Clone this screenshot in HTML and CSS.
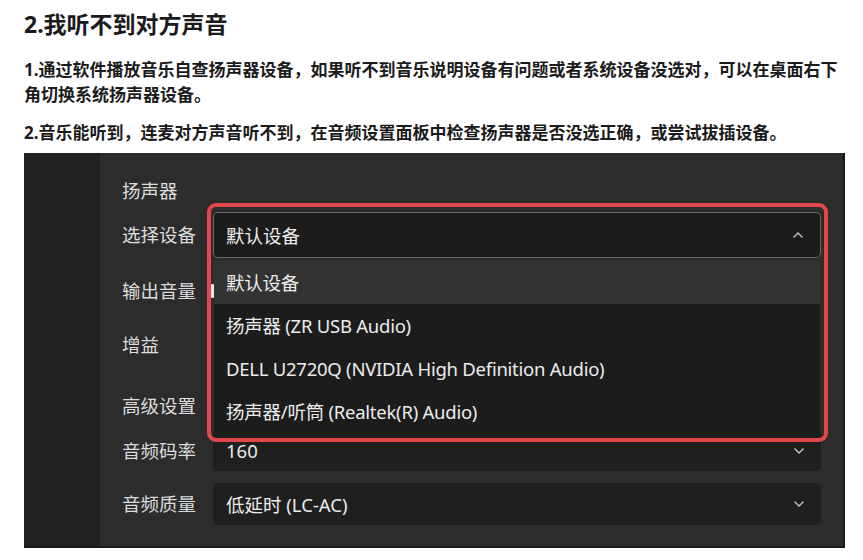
FILE: index.html
```html
<!DOCTYPE html>
<html lang="zh-CN">
<head>
<meta charset="utf-8">
<title>我听不到对方声音</title>
<link rel="stylesheet" href="styles.css">
</head>
<body>
<div class="doc">
  <h2 class="title">2.我听不到对方声音</h2>
  <p class="para para-first">1.通过软件播放音乐自查扬声器设备，如果听不到音乐说明设备有问题或者系统设备没选对，可以在桌面右下角切换系统扬声器设备。</p>
  <p class="para para-second">2.音乐能听到，连麦对方声音听不到，在音频设置面板中检查扬声器是否没选正确，或尝试拔插设备。</p>

  <div class="panel">
    <div class="sidebar"></div>
    <div class="main">
      <div class="heading heading-speaker">扬声器</div>

      <div class="row row-device">
        <div class="label">选择设备</div>
        <div class="control">
          <div class="select select-open">
            <span class="value">默认设备</span>
            <svg class="chev" width="12" height="8" viewBox="0 0 12 8"><path d="M1.5 6.5 L6 2 L10.5 6.5" fill="none" stroke="#c8c8c8" stroke-width="1.3"/></svg>
          </div>
          <ul class="dropdown">
            <li class="opt opt-active">默认设备</li>
            <li class="opt">扬声器 (ZR USB Audio)</li>
            <li class="opt">DELL U2720Q (NVIDIA High Definition Audio)</li>
            <li class="opt">扬声器/听筒 (Realtek(R) Audio)</li>
          </ul>
          <div class="highlight"></div>
        </div>
      </div>

      <div class="row row-volume">
        <div class="label">输出音量</div>
        <div class="control"><span class="thumb"></span></div>
      </div>

      <div class="row row-gain">
        <div class="label">增益</div>
        <div class="control"></div>
      </div>

      <div class="heading heading-adv">高级设置</div>

      <div class="row row-bitrate">
        <div class="label">音频码率</div>
        <div class="control">
          <div class="select select-plain">
            <span class="value">160</span>
            <svg class="chev" width="12" height="8" viewBox="0 0 12 8"><path d="M1.5 1.5 L6 6 L10.5 1.5" fill="none" stroke="#c8c8c8" stroke-width="1.3"/></svg>
          </div>
        </div>
      </div>

      <div class="row row-quality">
        <div class="label">音频质量</div>
        <div class="control">
          <div class="select select-plain">
            <span class="value">低延时 (LC-AC)</span>
            <svg class="chev" width="12" height="8" viewBox="0 0 12 8"><path d="M1.5 1.5 L6 6 L10.5 1.5" fill="none" stroke="#c8c8c8" stroke-width="1.3"/></svg>
          </div>
        </div>
      </div>
    </div>
  </div>
</div>
</body>
</html>
```

FILE: styles.css
```css
* { box-sizing: border-box; }

html, body {
  margin: 0;
  padding: 0;
  background: #ffffff;
}

body {
  font-family: "Noto Sans", "Noto Sans CJK SC", sans-serif;
  color: #1b1b1b;
}

.doc {
  width: 863px;
  height: 560px;
  padding: 9px 0 0 24px;
  overflow: hidden;
}

.title {
  margin: 0;
  font-size: 23px;
  line-height: 30px;
  font-weight: 700;
}

.para {
  margin: 0;
  width: 822px;
  font-size: 17px;
  line-height: 25px;
  font-weight: 700;
}

.para-first { margin-top: 18px; }
.para-second { margin-top: 13px; }

.panel {
  margin-top: 8px;
  width: 821px;
  height: 395px;
  display: flex;
  border-right: 2px solid #1a1a1a;
  border-bottom: 2px solid #1a1a1a;
}

.sidebar {
  width: 76px;
  background: #212121;
}

.main {
  flex: 1;
  background: #2c2c2c;
  padding: 25px 22px 0 22px;
  color: #dcdcdc;
  font-size: 18.5px;
}

.heading {
  height: 26px;
  line-height: 26px;
}

.heading-adv { margin-top: 25px; }

.row {
  display: flex;
  align-items: center;
}

.label {
  width: 91px;
  flex: none;
  line-height: 26px;
}

.control {
  flex: 1;
  position: relative;
  height: 100%;
  display: flex;
  align-items: center;
}

.row-device { margin-top: 8px; height: 46px; }
.row-volume { margin-top: 10px; height: 46px; }
.row-gain { margin-top: 8px; height: 46px; }
.row-bitrate { margin-top: 11px; height: 41px; }
.row-quality { margin-top: 12px; height: 42px; }

.select {
  width: 100%;
  height: 100%;
  display: flex;
  align-items: center;
  justify-content: space-between;
  padding: 0 16px 0 13px;
  border-radius: 5px;
  color: #ececec;
}

.select-open {
  background: #1c1c1c;
  border: 1px solid #6a6a6a;
  padding-left: 12px;
}

.select-plain {
  background: #1f1f1f;
}

.chev { flex: none; }

.dropdown {
  position: absolute;
  top: 49px;
  left: 1px;
  right: 1px;
  margin: 0;
  padding: 0;
  list-style: none;
  background: #1c1c1c;
  z-index: 3;
  border-radius: 0 0 4px 4px;
}

.opt {
  height: 43px;
  line-height: 44px;
  padding-left: 12px;
  color: #ececec;
  white-space: nowrap;
  letter-spacing: -0.25px;
}

.opt-active { background: #333333; }

.highlight {
  position: absolute;
  top: -9px;
  left: -6px;
  right: -7px;
  height: 239px;
  border: 4px solid #e2474b;
  border-radius: 9px;
  z-index: 4;
  pointer-events: none;
}

.thumb {
  display: block;
  width: 3px;
  height: 14px;
  margin-left: -2px;
  background: #e8e8e8;
  border-radius: 1px;
}
```
